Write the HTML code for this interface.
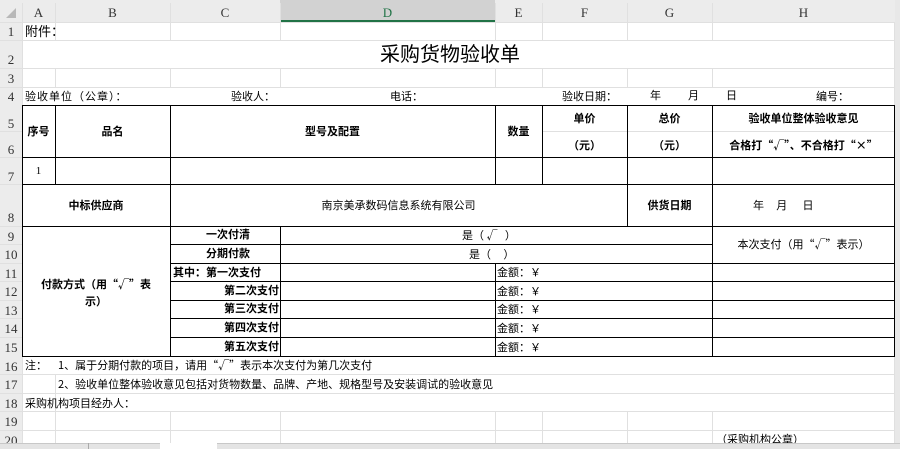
<!DOCTYPE html>
<html><head><meta charset="utf-8">
<style>
*{margin:0;padding:0;box-sizing:border-box}
body{width:900px;height:449px;overflow:hidden;background:#fff;position:relative;font-family:"Liberation Sans","Noto Sans CJK SC",sans-serif;color:#000}
div{position:absolute}
.g{background:#e0e0e0}
.k{background:#000}
.t{font-size:11px;line-height:14px;white-space:nowrap}
.b{font-weight:bold}
.c{text-align:center}
.q{font-family:"Noto Sans CJK SC",sans-serif}
.hd{font-family:"Liberation Serif","Noto Serif CJK SC",serif;font-size:13px;color:#333;text-align:center}
</style></head><body>
<div style="left:0;top:0;width:900px;height:22px;background:#ececec"></div>
<div style="left:280px;top:0;width:215px;height:22px;background:#d2d2d2"></div>
<div style="left:280px;top:20px;width:215px;height:2px;background:#217346"></div>
<div style="left:0;top:22px;width:22px;height:427px;background:#ececec"></div>
<div style="left:895px;top:0;width:5px;height:449px;background:#e8e8e8"></div>
<div style="left:6px;top:8px;width:0;height:0;border-left:10px solid transparent;border-bottom:10px solid #b8b8b8"></div>
<div class="g" style="left:22px;top:3px;width:1px;height:19px"></div>
<div class="g" style="left:55px;top:3px;width:1px;height:19px"></div>
<div class="g" style="left:170px;top:3px;width:1px;height:19px"></div>
<div class="g" style="left:280px;top:3px;width:1px;height:19px"></div>
<div class="g" style="left:495px;top:3px;width:1px;height:19px"></div>
<div class="g" style="left:542px;top:3px;width:1px;height:19px"></div>
<div class="g" style="left:627px;top:3px;width:1px;height:19px"></div>
<div class="g" style="left:712px;top:3px;width:1px;height:19px"></div>
<div class="hd" style="left:22px;top:5px;width:33px">A</div>
<div class="hd" style="left:55px;top:5px;width:115px">B</div>
<div class="hd" style="left:170px;top:5px;width:110px">C</div>
<div class="hd" style="left:280px;top:5px;width:215px;color:#217346">D</div>
<div class="hd" style="left:495px;top:5px;width:47px">E</div>
<div class="hd" style="left:542px;top:5px;width:85px">F</div>
<div class="hd" style="left:627px;top:5px;width:85px">G</div>
<div class="hd" style="left:712px;top:5px;width:183px">H</div>
<div class="hd" style="left:0;top:24px;width:22px">1</div>
<div class="hd" style="left:0;top:52px;width:22px">2</div>
<div class="hd" style="left:0;top:71px;width:22px">3</div>
<div class="hd" style="left:0;top:89px;width:22px">4</div>
<div class="hd" style="left:0;top:116px;width:22px">5</div>
<div class="hd" style="left:0;top:142px;width:22px">6</div>
<div class="hd" style="left:0;top:169px;width:22px">7</div>
<div class="hd" style="left:0;top:210px;width:22px">8</div>
<div class="hd" style="left:0;top:229px;width:22px">9</div>
<div class="hd" style="left:0;top:247px;width:22px">10</div>
<div class="hd" style="left:0;top:266px;width:22px">11</div>
<div class="hd" style="left:0;top:284px;width:22px">12</div>
<div class="hd" style="left:0;top:303px;width:22px">13</div>
<div class="hd" style="left:0;top:321px;width:22px">14</div>
<div class="hd" style="left:0;top:340px;width:22px">15</div>
<div class="hd" style="left:0;top:359px;width:22px">16</div>
<div class="hd" style="left:0;top:377px;width:22px">17</div>
<div class="hd" style="left:0;top:396px;width:22px">18</div>
<div class="hd" style="left:0;top:414px;width:22px">19</div>
<div class="hd" style="left:0;top:433px;width:22px">20</div>
<div class="g" style="left:0;top:22px;width:895px;height:1px"></div>
<div class="g" style="left:0;top:40px;width:895px;height:1px"></div>
<div class="g" style="left:0;top:68px;width:895px;height:1px"></div>
<div class="g" style="left:0;top:87px;width:895px;height:1px"></div>
<div class="g" style="left:0;top:131px;width:22px;height:1px"></div>
<div class="g" style="left:542px;top:131px;width:353px;height:1px"></div>
<div class="g" style="left:0;top:157px;width:22px;height:1px"></div>
<div class="g" style="left:0;top:184px;width:22px;height:1px"></div>
<div class="g" style="left:0;top:226px;width:22px;height:1px"></div>
<div class="g" style="left:0;top:244px;width:22px;height:1px"></div>
<div class="g" style="left:0;top:263px;width:22px;height:1px"></div>
<div class="g" style="left:0;top:281px;width:22px;height:1px"></div>
<div class="g" style="left:0;top:300px;width:22px;height:1px"></div>
<div class="g" style="left:0;top:318px;width:22px;height:1px"></div>
<div class="g" style="left:0;top:337px;width:22px;height:1px"></div>
<div class="g" style="left:0;top:374px;width:895px;height:1px"></div>
<div class="g" style="left:0;top:393px;width:895px;height:1px"></div>
<div class="g" style="left:0;top:411px;width:895px;height:1px"></div>
<div class="g" style="left:0;top:430px;width:895px;height:1px"></div>
<div class="g" style="left:22px;top:22px;width:1px;height:83px"></div>
<div class="g" style="left:55px;top:22px;width:1px;height:18px"></div>
<div class="g" style="left:170px;top:22px;width:1px;height:18px"></div>
<div class="g" style="left:280px;top:22px;width:1px;height:18px"></div>
<div class="g" style="left:495px;top:22px;width:1px;height:18px"></div>
<div class="g" style="left:542px;top:22px;width:1px;height:18px"></div>
<div class="g" style="left:627px;top:22px;width:1px;height:18px"></div>
<div class="g" style="left:712px;top:22px;width:1px;height:18px"></div>
<div class="g" style="left:55px;top:68px;width:1px;height:19px"></div>
<div class="g" style="left:170px;top:68px;width:1px;height:19px"></div>
<div class="g" style="left:280px;top:68px;width:1px;height:19px"></div>
<div class="g" style="left:495px;top:68px;width:1px;height:19px"></div>
<div class="g" style="left:542px;top:68px;width:1px;height:19px"></div>
<div class="g" style="left:627px;top:68px;width:1px;height:19px"></div>
<div class="g" style="left:712px;top:68px;width:1px;height:19px"></div>
<div class="g" style="left:894px;top:22px;width:1px;height:427px"></div>
<div class="g" style="left:22px;top:356px;width:1px;height:93px"></div>
<div class="g" style="left:55px;top:374px;width:1px;height:75px"></div>
<div class="g" style="left:170px;top:411px;width:1px;height:38px"></div>
<div class="g" style="left:280px;top:411px;width:1px;height:38px"></div>
<div class="g" style="left:495px;top:411px;width:1px;height:38px"></div>
<div class="g" style="left:542px;top:411px;width:1px;height:38px"></div>
<div class="g" style="left:627px;top:411px;width:1px;height:38px"></div>
<div class="g" style="left:712px;top:411px;width:1px;height:38px"></div>
<div class="k" style="left:22px;top:105px;width:873px;height:1px"></div>
<div class="k" style="left:22px;top:157px;width:873px;height:1px"></div>
<div class="k" style="left:22px;top:184px;width:873px;height:1px"></div>
<div class="k" style="left:22px;top:226px;width:873px;height:1px"></div>
<div class="k" style="left:170px;top:244px;width:542px;height:1px"></div>
<div class="k" style="left:170px;top:263px;width:725px;height:1px"></div>
<div class="k" style="left:170px;top:281px;width:725px;height:1px"></div>
<div class="k" style="left:170px;top:300px;width:725px;height:1px"></div>
<div class="k" style="left:170px;top:318px;width:725px;height:1px"></div>
<div class="k" style="left:170px;top:337px;width:725px;height:1px"></div>
<div class="k" style="left:22px;top:356px;width:873px;height:1px"></div>
<div class="k" style="left:22px;top:105px;width:1px;height:251px"></div>
<div class="k" style="left:894px;top:105px;width:1px;height:252px"></div>
<div class="k" style="left:55px;top:105px;width:1px;height:79px"></div>
<div class="k" style="left:170px;top:105px;width:1px;height:251px"></div>
<div class="k" style="left:280px;top:226px;width:1px;height:130px"></div>
<div class="k" style="left:495px;top:105px;width:1px;height:79px"></div>
<div class="k" style="left:495px;top:263px;width:1px;height:93px"></div>
<div class="k" style="left:542px;top:105px;width:1px;height:79px"></div>
<div class="k" style="left:627px;top:105px;width:1px;height:121px"></div>
<div class="k" style="left:712px;top:105px;width:1px;height:251px"></div>
<div class="t q" style="left:25px;top:24px;font-size:13px">附件：</div>
<div class="t" style="left:270px;top:43px;width:360px;text-align:center;font-size:20px;line-height:24px">采购货物验收单</div>
<div class="t q" style="left:25px;top:89px;letter-spacing:1px">验收单位（公章）：</div>
<div class="t q" style="left:231px;top:89px">验收人：</div>
<div class="t q" style="left:390px;top:89px">电话：</div>
<div class="t q" style="left:562px;top:89px">验收日期：</div>
<div class="t" style="left:650px;top:89px">年</div>
<div class="t" style="left:688px;top:89px">月</div>
<div class="t" style="left:726px;top:89px">日</div>
<div class="t q" style="left:816px;top:89px">编号：</div>
<div class="t b c" style="left:22px;top:125px;width:33px">序号</div>
<div class="t b c" style="left:55px;top:125px;width:115px">品名</div>
<div class="t b c" style="left:170px;top:125px;width:325px">型号及配置</div>
<div class="t b c" style="left:495px;top:125px;width:47px">数量</div>
<div class="t b c" style="left:542px;top:112px;width:85px">单价</div>
<div class="t b c q" style="left:542px;top:138px;width:85px">（元）</div>
<div class="t b c" style="left:627px;top:112px;width:85px">总价</div>
<div class="t b c q" style="left:627px;top:138px;width:85px">（元）</div>
<div class="t b c" style="left:712px;top:112px;width:183px">验收单位整体验收意见</div>
<div class="t b c q" style="left:712px;top:138px;width:183px">合格打“√”、不合格打“×”</div>
<div class="t c" style="left:22px;top:164px;width:33px;font-family:'Liberation Serif',serif">1</div>
<div class="t b c" style="left:22px;top:199px;width:148px">中标供应商</div>
<div class="t c" style="left:170px;top:199px;width:457px">南京美承数码信息系统有限公司</div>
<div class="t b c" style="left:627px;top:199px;width:85px">供货日期</div>
<div class="t" style="left:753px;top:199px">年&nbsp;&nbsp;&nbsp;&nbsp;月&nbsp;&nbsp;&nbsp;&nbsp;&nbsp;日</div>
<div class="t b c q" style="left:22px;top:276px;width:148px;line-height:17px">付款方式（用“√”表<br>示）</div>
<div class="t b" style="left:170px;top:228px;width:110px;text-align:right;padding-right:30px">一次付清</div>
<div class="t b" style="left:170px;top:247px;width:110px;text-align:right;padding-right:30px">分期付款</div>
<div class="t b q" style="left:173px;top:265px">其中：第一次支付</div>
<div class="t b" style="left:170px;top:284px;width:109px;text-align:right">第二次支付</div>
<div class="t b" style="left:170px;top:302px;width:109px;text-align:right">第三次支付</div>
<div class="t b" style="left:170px;top:321px;width:109px;text-align:right">第四次支付</div>
<div class="t b" style="left:170px;top:340px;width:109px;text-align:right">第五次支付</div>
<div class="t q" style="left:462px;top:228px">是（&nbsp;√&nbsp;&nbsp;&nbsp;）</div>
<div class="t q" style="left:469px;top:247px">是（&nbsp;&nbsp;&nbsp;&nbsp;&nbsp;）</div>
<div class="t c q" style="left:712px;top:237px;width:183px">本次支付（用“√”表示）</div>
<div class="t q" style="left:497px;top:265px">金额：￥</div>
<div class="t q" style="left:497px;top:284px">金额：￥</div>
<div class="t q" style="left:497px;top:302px">金额：￥</div>
<div class="t q" style="left:497px;top:321px">金额：￥</div>
<div class="t q" style="left:497px;top:340px">金额：￥</div>
<div class="t q" style="left:25px;top:358px">注：</div>
<div class="t q" style="left:58px;top:358px">1、属于分期付款的项目，请用“√”表示本次支付为第几次支付</div>
<div class="t q" style="left:58px;top:377px">2、验收单位整体验收意见包括对货物数量、品牌、产地、规格型号及安装调试的验收意见</div>
<div class="t q" style="left:25px;top:396px">采购机构项目经办人：</div>
<div class="t q" style="left:716px;top:432px">（采购机构公章）</div>
<div style="left:0;top:443px;width:900px;height:6px;background:#e4e4e4;border-top:1px solid #c8c8c8"></div>
<div style="left:160px;top:443px;width:57px;height:6px;background:#fff"></div>
<div style="left:88px;top:443px;width:1px;height:6px;background:#aaa"></div>
</body></html>
